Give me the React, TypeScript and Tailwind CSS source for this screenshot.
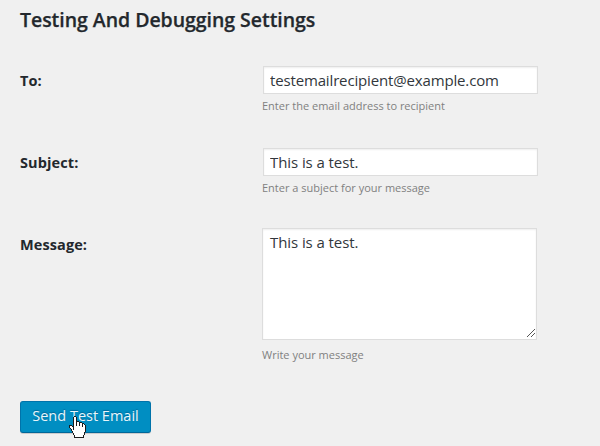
import React from "react";

const field =
  "block w-[275px] border border-[#ddd] bg-white text-[15px] text-[#32373c] shadow-[inset_0_1px_2px_rgba(0,0,0,0.07)] outline-none";

type RowProps = { label: string; hint: string; className: string; labelClass?: string; hintClass?: string; children: React.ReactNode };

function Row({ label, hint, className, labelClass = "pt-[5px]", hintClass = "mt-[4px]", children }: RowProps) {
  return (
    <div className={`flex ${className}`}>
      <div className={`w-[242px] shrink-0 text-[14.5px] leading-[20px] font-bold tracking-[0.1px] text-[#23282d] ${labelClass}`}>{label}</div>
      <div>
        {children}
        <p className={`text-[11px] leading-[16px] text-[#808080] ${hintClass}`}>{hint}</p>
      </div>
    </div>
  );
}

// Pixel rows of the pointing hand: # outline, . fill
const HAND = [
  "     ##          ",
  "    #..#         ",
  "    #..#         ",
  "    #..#         ",
  "    #..#         ",
  "    #..###       ",
  "    #..#..###    ",
  "    #..#..#..##  ",
  "    #..#..#..#.# ",
  "### #..#..#..#..#",
  "#..##........#..#",
  "#...#...........#",
  " #..#...........#",
  "  #.#...........#",
  "  #.............#",
  "   #............#",
  "   #...........# ",
  "    #..........# ",
  "    #..........# ",
  "     #........#  ",
  "     #........#  ",
  "     ##########  ",
];

function pixels(mark: string) {
  return HAND.flatMap((row, y) => [...row].map((c, x) => (c === mark ? `M${x} ${y}h1v1h-1z` : ""))).join("");
}

function HandCursor() {
  return (
    <svg className="absolute top-[14px] left-[48px]" width="17" height="22" viewBox="0 0 17 22" shapeRendering="crispEdges">
      <path d={pixels(".")} fill="#fff" />
      <path d={pixels("#")} fill="#1c1c1c" />
    </svg>
  );
}

export default function App() {
  return (
    <main className="h-[446px] w-[600px] overflow-hidden bg-[#f0f0f0] pt-[6px] pl-5 font-['Open_Sans',sans-serif]">
      <h3 className="text-[19.5px] leading-[28px] font-semibold tracking-[-0.04px] text-[#23282d] [-webkit-text-stroke:0.25px_#23282d]">
        Testing And Debugging Settings
      </h3>
      <Row label="To:" hint="Enter the email address to recipient" className="mt-[32px] h-[82px]">
        <input className={`${field} ml-px h-[28px] px-[6px] tracking-[-0.15px]`} defaultValue="testemailrecipient@example.com" />
      </Row>
      <Row label="Subject:" hint="Enter a subject for your message" className="h-[80px]">
        <input className={`${field} ml-px h-[28px] px-[6px] tracking-[-0.08px]`} defaultValue="This is a test." />
      </Row>
      <Row label="Message:" hint="Write your message" className="h-[173px]" labelClass="pt-[7px]" hintClass="mt-[7px]">
        <div className="relative">
          <textarea className={`${field} h-[112px] resize-none px-[7px] py-[3px] leading-[20px] tracking-[-0.08px]`} defaultValue="This is a test." />
          <svg className="absolute right-[2px] bottom-[3px]" width="8" height="8" viewBox="0 0 8 8" shapeRendering="crispEdges">
            <path d="M0 7h1v1H0zM1 6h1v1H1zM2 5h1v1H2zM3 4h1v1H3zM4 3h1v1H4zM5 2h1v1H5zM6 1h1v1H6zM7 0h1v1H7zM4 7h1v1H4zM5 6h1v1H5zM6 5h1v1H6zM7 4h1v1H7z" fill="#555" />
          </svg>
        </div>
      </Row>
      <button className="relative block h-[32px] w-[131px] rounded-[3px] border border-[#0073aa] border-b-[#006799] bg-[#008ec2] pb-[2px] text-[14.5px] leading-[28px] whitespace-nowrap text-[#e8f6fb] shadow-[0_1px_0_#ccc] [text-shadow:0_-1px_1px_#006799]">
        Send Test Email
        <HandCursor />
      </button>
    </main>
  );
}
